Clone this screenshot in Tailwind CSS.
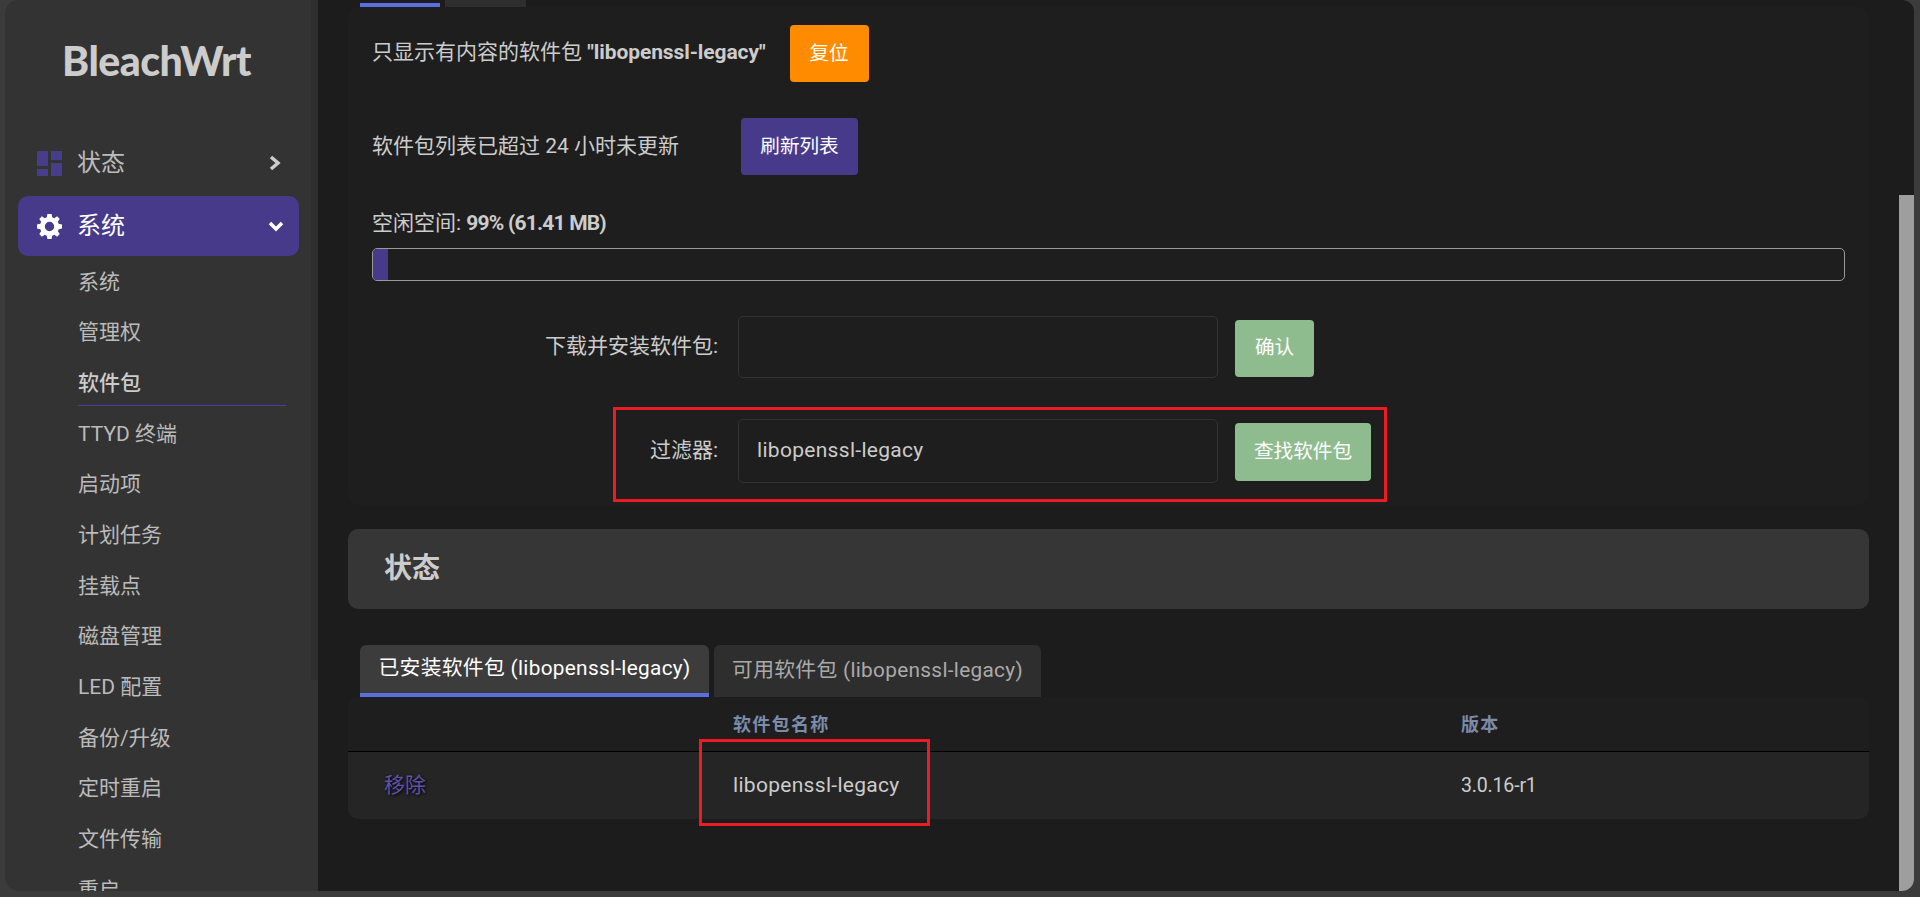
<!DOCTYPE html>
<html lang="zh-CN">
<head>
    <meta charset="UTF-8">
    <title>BleachWrt - 软件包</title>
    <script src="https://cdn.jsdelivr.net/npm/@tailwindcss/browser@4"></script>
</head>
<body class="h-screen overflow-hidden bg-[#3b3b3b] font-['Roboto','Noto_Sans_CJK_SC',sans-serif] text-[21px] text-[#cccccc]">
    <div class="flex h-[891px] pl-[5px] pr-[6px]">
        <!-- Sidebar -->
        <aside class="flex w-[313px] shrink-0 overflow-hidden rounded-l-[14px] bg-[#333333]">
            <nav class="w-[306px] shrink-0">
                <div class="flex h-[133px] items-start pl-[57px] pt-[36px]">
                    <span class="font-['Lato',sans-serif] text-[41px] leading-[50px] font-black tracking-[-0.5px] text-[#cccccc]">BleachWrt</span>
                </div>
                <div class="flex h-[60px] items-center pl-[32px] pr-[30px] text-[24px] text-[#bbbbbb]">
                    <svg class="mr-[15px] h-[25px] w-[25px] fill-[#483d8b]" viewBox="0 0 25 25"><path d="M0 0h11v15H0zM14 0h11v9H14zM0 18h11v7H0zM14 12h11v13H14z"/></svg>
                    <span class="flex-1">状态</span>
                    <svg class="h-[16px] w-[12px] fill-none stroke-[#cccccc] stroke-[3.5]" viewBox="0 0 12 16"><path d="M2 2l7 6-7 6"/></svg>
                </div>
                <div class="ml-[13px] mr-[12px] mt-[3px] flex h-[60px] items-center rounded-[10px] bg-[#483a8b] pl-[19px] pr-[15px] text-[24px] text-white">
                    <svg class="mr-[15px] h-[25px] w-[25px] fill-white" viewBox="0 0 24 24"><path fill-rule="evenodd" d="M10 0h4l.6 3.2 2 .8L19.300 2.200l2.500 2.500L20 7.400l.8 2L24 10v4l-3.200.6-.8 2 1.800 2.700-2.500 2.500L16.600 20l-2 .8L14 24h-4l-.6-3.200-2-.8-2.700 1.800-2.500-2.500L4 16.600l-.8-2L0 14v-4l3.200-.6.8-2-1.800-2.700 2.500-2.500L7.400 4l2-.8zM12 7.500a4.500 4.500 0 1 0 0 9 4.500 4.500 0 0 0 0-9z"/></svg>
                    <span class="flex-1">系统</span>
                    <svg class="h-[12px] w-[16px] fill-none stroke-white stroke-[3.5]" viewBox="0 0 16 12"><path d="M2 3l6 6 6-6"/></svg>
                </div>
                <div class="pl-[73px] pt-[1px] text-[21px] text-[#bbbbbb]">
                    <div class="flex h-[50.7px] items-center">系统</div>
                    <div class="flex h-[50.7px] items-center">管理权</div>
                    <div class="mb-[2.7px] flex h-[48px] w-[208px] items-center border-b border-[#4a3ea6] pt-[3px] font-medium text-[#cccccc]">软件包</div>
                    <div class="flex h-[50.7px] items-center">TTYD 终端</div>
                    <div class="flex h-[50.7px] items-center">启动项</div>
                    <div class="flex h-[50.7px] items-center">计划任务</div>
                    <div class="flex h-[50.7px] items-center">挂载点</div>
                    <div class="flex h-[50.7px] items-center">磁盘管理</div>
                    <div class="flex h-[50.7px] items-center">LED 配置</div>
                    <div class="flex h-[50.7px] items-center">备份/升级</div>
                    <div class="flex h-[50.7px] items-center">定时重启</div>
                    <div class="flex h-[50.7px] items-center">文件传输</div>
                    <div class="flex h-[50.7px] items-center">重启</div>
                </div>
            </nav>
            <div class="h-[680px] w-[7px] shrink-0 bg-[#2e2e2e]"></div>
        </aside>

        <!-- Main -->
        <main class="relative flex min-w-0 flex-1 overflow-hidden rounded-r-[12px] bg-[#1c1c1c]">
            <div class="min-w-0 flex-1 px-[30px]">
                <div class="flex h-[7px] gap-[5px] pl-[12px]">
                    <div class="mt-[3px] h-[4px] w-[80px] bg-[#5b6fdc]"></div>
                    <div class="h-[7px] w-[81px] bg-[#2e2e2e]"></div>
                </div>

                <section class="rounded-[10px] bg-[#1e1e1e] px-[24px] pb-[22px] pt-[18px]">
                    <div class="flex items-center">
                        <span class="pb-[2px]">只显示有内容的软件包 <b class="font-bold tracking-[-0.1px]">"libopenssl-legacy"</b></span>
                        <button class="ml-[24px] h-[57px] w-[79px] rounded-[4px] bg-[#ff8c00] text-[19.6px] text-white">复位</button>
                    </div>
                    <div class="mt-[36px] flex items-center">
                        <span>软件包列表已超过 24 小时未更新</span>
                        <button class="ml-[62px] h-[57px] w-[117px] rounded-[4px] bg-[#483a8b] text-[19.6px] text-white">刷新列表</button>
                    </div>
                    <div class="mt-[35px] h-[26px] leading-[26px]">空闲空间: <b class="font-bold tracking-[-0.8px]">99% (61.41 MB)</b></div>
                    <div class="mt-[12px] h-[33px] overflow-hidden rounded-[5px] border border-[#999999]">
                        <div class="h-full w-[15px] bg-[#483a8b]"></div>
                    </div>
                    <div class="mt-[35px] flex h-[62px] items-center">
                        <label class="w-[346px] shrink-0 text-right">下载并安装软件包:</label>
                        <input type="text" class="ml-[20px] h-[62px] w-[480px] rounded-[5px] border border-[#333333] bg-[#1e1e1e] px-[18px]">
                        <button class="ml-[17px] mt-[2px] h-[57px] w-[79px] rounded-[4px] bg-[#8fbc8f] text-[19.6px] text-white">确认</button>
                    </div>
                    <div class="mt-[41px] flex h-[64px] items-center">
                        <label class="w-[346px] shrink-0 text-right">过滤器:</label>
                        <input type="text" value="libopenssl-legacy" class="ml-[20px] h-[64px] w-[480px] rounded-[5px] border border-[#333333] bg-[#1e1e1e] px-[18px] pb-[2px] tracking-[0.3px] text-[#cccccc]">
                        <button class="ml-[17px] mt-[2px] h-[58px] w-[136px] rounded-[4px] bg-[#8fbc8f] text-[19.6px] text-white">查找软件包</button>
                    </div>
                </section>

                <h3 class="mt-[24px] flex h-[80px] items-center rounded-[10px] bg-[#363636] pl-[36px] text-[28px] font-bold text-[#cccccc]">状态</h3>

                <div class="mt-[36px] flex h-[52px] gap-[5px] pl-[12px] text-[20.8px] tracking-[0.3px]">
                    <div class="flex w-[349px] items-center justify-center rounded-t-[6px] border-b-4 border-[#5b6fdc] bg-[#3c3c3c] text-white">已安装软件包 (libopenssl-legacy)</div>
                    <div class="flex w-[327px] items-center justify-center rounded-t-[6px] bg-[#2e2e2e] text-[#aaaaaa]">可用软件包 (libopenssl-legacy)</div>
                </div>

                <div class="overflow-hidden rounded-[10px] bg-[#252525]">
                    <div class="grid h-[55px] grid-cols-[385px_728px_1fr] items-center border-b border-black bg-[#1e1e1e] text-[18px] font-bold tracking-[1.3px] text-[#7b8ba8]">
                        <span></span>
                        <span>软件包名称</span>
                        <span>版本</span>
                    </div>
                    <div class="grid h-[67px] grid-cols-[385px_728px_1fr] items-center">
                        <a href="#" class="pl-[36px] text-[#5f52a8] [text-shadow:1px_1px_3px_#000]">移除</a>
                        <span class="tracking-[0.3px]">libopenssl-legacy</span>
                        <span class="text-[19.6px] tracking-[-0.2px]">3.0.16-r1</span>
                    </div>
                </div>
            </div>

            <!-- Scrollbar -->
            <div class="w-[15px] shrink-0 pt-[195px]">
                <div class="h-full bg-[#9e9e9e]"></div>
            </div>

            <!-- Annotation boxes -->
            <div class="absolute left-[295px] top-[407px] h-[95px] w-[774px] border-[3px] border-[#ed1c24]"></div>
            <div class="absolute left-[381px] top-[739px] h-[87px] w-[231px] border-[3px] border-[#ed1c24]"></div>
        </main>
    </div>
</body>
</html>
